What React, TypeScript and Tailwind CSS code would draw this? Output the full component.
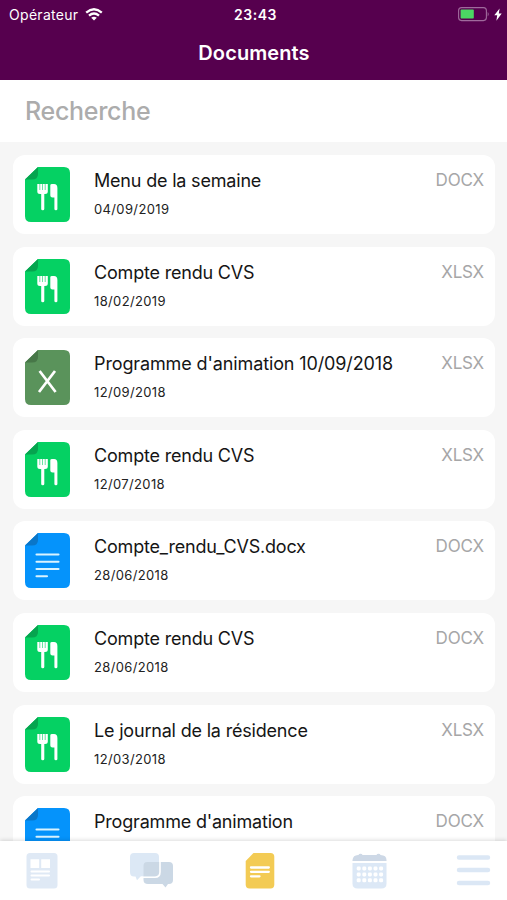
import React from 'react';

type DocKind = 'menu' | 'excel' | 'text';

interface DocumentItem {
  id: number;
  title: string;
  date?: string;
  ext: string;
  kind: DocKind;
}

const documents: DocumentItem[] = [
  { id: 1, title: 'Menu de la semaine', date: '04/09/2019', ext: 'DOCX', kind: 'menu' },
  { id: 2, title: 'Compte rendu CVS', date: '18/02/2019', ext: 'XLSX', kind: 'menu' },
  { id: 3, title: "Programme d'animation 10/09/2018", date: '12/09/2018', ext: 'XLSX', kind: 'excel' },
  { id: 4, title: 'Compte rendu CVS', date: '12/07/2018', ext: 'XLSX', kind: 'menu' },
  { id: 5, title: 'Compte_rendu_CVS.docx', date: '28/06/2018', ext: 'DOCX', kind: 'text' },
  { id: 6, title: 'Compte rendu CVS', date: '28/06/2018', ext: 'DOCX', kind: 'menu' },
  { id: 7, title: 'Le journal de la résidence', date: '12/03/2018', ext: 'XLSX', kind: 'menu' },
  { id: 8, title: "Programme d'animation", ext: 'DOCX', kind: 'text' },
];

const fileColors: Record<DocKind, { body: string; fold: string }> = {
  menu: { body: '#05d163', fold: '#06a44f' },
  excel: { body: '#5a935b', fold: '#477748' },
  text: { body: '#0593fb', fold: '#0a76c8' },
};

const FileIcon: React.FC<{ kind: DocKind }> = ({ kind }) => {
  const { body, fold } = fileColors[kind];
  return (
    <svg width="45" height="55" viewBox="0 0 45 55" fill="none" className="shrink-0">
      <path d="M13 0H39Q45 0 45 6V49Q45 55 39 55H6Q0 55 0 49V12.5Z" fill={body} />
      <path d="M13 0V7Q13 12.5 7 12.5H0Z" fill={fold} />
      {kind === 'menu' && (
        <g fill="#fff">
          <path d="M12.3 17H22.8V24.5Q22.8 27 20 27H19.3V42Q19.3 43.3 17.8 43.3Q16.2 43.3 16.2 42V27H15Q12.3 27 12.3 24.5Z" />
          <path d="M25.3 18.2Q25.3 17 27 17H29Q32.4 17 32.4 21V42Q32.4 43.3 30.9 43.3Q29.4 43.3 29.4 42V30.5H27.5Q25.3 30.5 25.3 28.5Z" />
          <path d="M14.8 17V23M17.5 17V23M20.2 17V23" stroke={body} strokeWidth="0.6" />
        </g>
      )}
      {kind === 'excel' && (
        <path d="M14.6 21L30.6 42M30 21L14 42" stroke="#fff" strokeWidth="2.7" />
      )}
      {kind === 'text' && (
        <path d="M11.5 21.5H33.5M11.5 28.7H33.5M11.5 36H33.5M11.5 43.2H22" stroke="#d9f3ff" strokeWidth="2.1" strokeLinecap="round" />
      )}
    </svg>
  );
};

const StatusBar: React.FC = () => (
  <div className="grid h-7 grid-cols-3 items-center pr-[5px] pl-[9px] text-white">
    <div className="flex items-center gap-[7px]">
      <span className="text-[14px] tracking-[0.3px]">Opérateur</span>
      <svg width="18" height="13" viewBox="0 0 18 13" fill="none" stroke="#fff" strokeWidth="2.3">
        <path d="M1.2 4.6Q9 -2.2 16.8 4.6" />
        <path d="M4 7.7Q9 3.4 14 7.7" />
        <path d="M9 12.6L6.2 9.8Q9 7.6 11.8 9.8Z" fill="#fff" stroke="none" />
      </svg>
    </div>
    <span className="text-center text-[14px] font-semibold tracking-[0.5px]">23:43</span>
    <div className="flex items-center justify-end gap-[4px]">
      <svg width="32" height="15" viewBox="0 0 32 15" fill="none">
        <rect x="0.6" y="0.6" width="27.8" height="13" rx="3" stroke="#a06a9d" strokeWidth="1.1" />
        <rect x="2.6" y="2.6" width="13.2" height="9" rx="0.8" fill="#4bd763" />
        <path d="M29.7 5Q31.7 7.1 29.7 9.4Z" fill="#a06a9d" />
      </svg>
      <svg width="8" height="13" viewBox="0 0 8 13" fill="#fff">
        <path d="M5.6 0.4L0.3 7.2H3.2L2.4 12.7L7.7 5.5H4.8Z" />
      </svg>
    </div>
  </div>
);

const DocumentCard: React.FC<{ doc: DocumentItem }> = ({ doc }) => (
  <div className="flex h-[79px] shrink-0 items-start rounded-xl bg-white pt-3 pr-[11px] pl-3">
    <FileIcon kind={doc.kind} />
    <div className="ml-6 flex-1">
      <h2
        className={`text-[18px] leading-7 text-[#151515] ${doc.kind === 'excel' ? 'tracking-[-0.12px]' : 'tracking-[-0.19px]'}`}
      >
        {doc.title}
      </h2>
      {doc.date && <p className="mt-[4px] text-[13px] leading-5 tracking-[0.36px] text-[#222]">{doc.date}</p>}
    </div>
    <span className="text-[17px] leading-[26px] tracking-[-0.2px] text-[#a6a6a7]">{doc.ext}</span>
  </div>
);

const TabBar: React.FC = () => (
  <nav className="z-10 flex h-[59px] shrink-0 items-start bg-white pt-[11px] pl-[26px] shadow-[0_-1px_4px_rgba(0,0,0,0.14)]">
    <svg width="32" height="37" viewBox="0 0 32 37" fill="none">
      <rect x="0.5" y="1" width="31" height="35.5" rx="3.5" fill="#dfe9f5" />
      <path d="M4.5 7.3H13.2V16H4.5ZM15.2 7.3H24V16H15.2Z" fill="#fff" />
      <path d="M5.5 19.5H23M5.5 23.4H23M5.5 27.4H13" stroke="#fff" strokeWidth="2" strokeLinecap="round" />
    </svg>
    <svg width="45" height="37" viewBox="0 0 45 37" fill="none" className="ml-[71px]">
      <path d="M18 10H40Q44 10 44 14V28Q44 32 40 32H39L36.5 35.5L33.5 32H19Q14.5 32 14.5 28V14Z" fill="#cbd8e5" />
      <path d="M5 1H26Q30 1 30 5V20Q30 24.5 25.5 24.5H11.5L8 28.2L6.5 24.5H5Q1 24.5 1 20V5Q1 1 5 1Z" fill="#dce8f5" />
      <path d="M18 10H30V20Q30 24.5 25.5 24.5H14.5V14Q14.5 10 18 10Z" fill="#cbd8e5" />
      <path d="M31 6V20Q31 25.2 26 25.2H12" stroke="#fff" strokeWidth="1.6" />
    </svg>
    <svg width="30" height="37" viewBox="0 0 30 37" fill="none" className="ml-[71px]">
      <path d="M8.5 1H25.5Q29.3 1 29.3 5V32.5Q29.3 36.5 25.5 36.5H4.5Q0.7 36.5 0.7 32.5V9Z" fill="#f3cb54" />
      <path d="M6 15.5H23.8M6 19.8H23.8M6 24.3H14.5" stroke="#fff" strokeWidth="2.3" strokeLinecap="round" />
    </svg>
    <svg width="35" height="37" viewBox="0 0 35 37" fill="none" className="ml-[77px]">
      <path d="M0.5 11H34.5V31.5Q34.5 36.5 29.5 36.5H5.5Q0.5 36.5 0.5 31.5Z" fill="#dce8f6" />
      <path d="M0.5 9V8Q1 3.2 6 3H6.5Q7 1.8 8.5 1.8Q10 1.8 10.5 3H24.5Q25 1.8 26.5 1.8Q28 1.8 28.5 3Q34.5 3.2 34.5 8V9Z" fill="#cdd8e6" />
      {[16.5, 22.5, 28.3].map((y) =>
        [6.7, 12.3, 17.9, 23.5, 29.1].map((x) => (
          <rect key={`${x}-${y}`} x={x - 2} y={y - 2} width="4" height="4" rx="1.4" fill="#fff" />
        ))
      )}
    </svg>
    <svg width="35" height="37" viewBox="0 0 35 37" fill="none" stroke="#dbe7f5" strokeWidth="4.4" strokeLinecap="round" className="ml-[69px]">
      <path d="M3 5.5H32M3 18H32M3 31H32" />
    </svg>
  </nav>
);

const App: React.FC = () => {
  return (
    <div className="flex h-[900px] w-[507px] flex-col overflow-hidden bg-[#f6f6f6] font-['Inter',sans-serif]">
      <header className="h-20 shrink-0 bg-[#56004e]">
        <StatusBar />
        <h1 className="mt-[11px] pl-[1px] text-center text-[20px] leading-7 font-semibold tracking-[0.1px] text-white">Documents</h1>
      </header>

      <div className="h-[62px] shrink-0 bg-white px-[25px] py-3">
        <input
          type="text"
          placeholder="Recherche"
          className="h-[38px] w-full bg-transparent text-[25px] font-medium tracking-[-0.3px] outline-none placeholder:text-[#acacac]"
        />
      </div>

      <main className="flex min-h-0 flex-1 flex-col gap-[12.6px] overflow-hidden pt-[13px] pr-3 pl-[13px]">
        {documents.map((doc) => (
          <DocumentCard key={doc.id} doc={doc} />
        ))}
      </main>

      <TabBar />
    </div>
  );
};

export default App;
